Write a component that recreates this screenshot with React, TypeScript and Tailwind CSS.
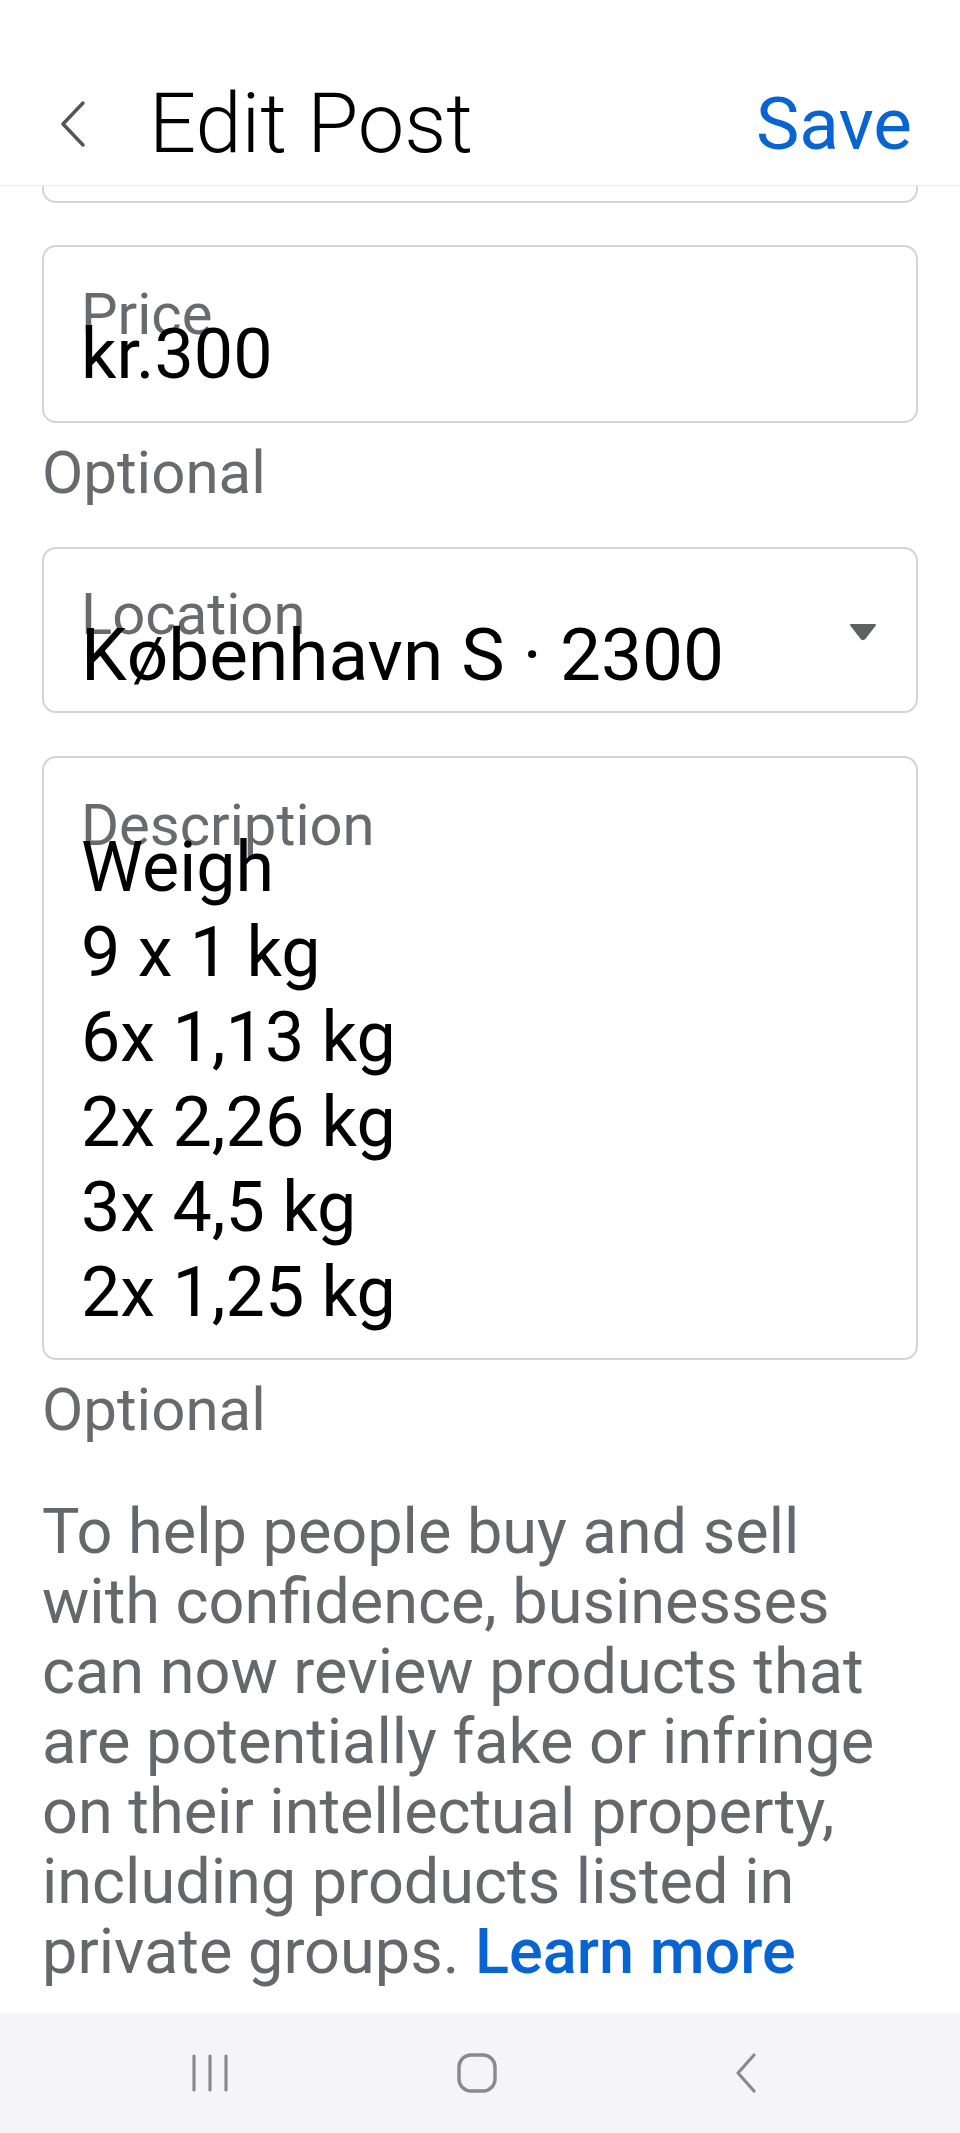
import React from "react";

const font = { fontFamily: "Roboto, 'Noto Sans', Arial, sans-serif" };

const Field = ({
  label,
  children,
  className,
}: {
  label: string;
  children: React.ReactNode;
  className?: string;
}) => (
  <div
    className={`mx-[42px] rounded-[14px] border-2 border-[#d2d4d8] pl-[37px] pt-[37px] ${className ?? ""}`}
  >
    <div className="text-[58px] leading-[60px] text-[#686a6f]">{label}</div>
    {children}
  </div>
);

export default function App() {
  const lines = ["Weigh", "9 x 1 kg", "6x 1,13 kg", "2x 2,26 kg", "3x 4,5 kg", "2x 1,25 kg"];
  return (
    <div className="flex h-[2133px] flex-col bg-white text-black" style={font}>
      {/* header */}
      <div className="flex h-[186px] items-center border-b border-[#ececec] pt-[62px] pl-[56px] pr-[48px]">
        <svg width="34" height="48" viewBox="0 0 34 48" className="shrink-0">
          <path
            d="M27 3 L7 24 L27 45"
            fill="none"
            stroke="#555658"
            strokeWidth="3.5"
            strokeLinecap="round"
            strokeLinejoin="round"
          />
        </svg>
        <h1 className="ml-[59px] text-[83px] leading-[82px] font-light">Edit Post</h1>
        <button className="ml-auto text-[73px] leading-[70px] text-[#0864d2]">Save</button>
      </div>

      {/* field scrolled under header */}
      <div className="mx-[42px] h-[17px] rounded-b-[14px] border-x-2 border-b-2 border-[#d2d4d8]" />

      <Field label="Price" className="mt-[42px] h-[178px]">
        <div className="-mt-[25px] text-[70px] leading-[70px]">kr.300</div>
      </Field>
      <div className="mx-[42px] mt-[20px] text-[60px] leading-[60px] text-[#686a6f]">Optional</div>

      <div className="mx-[42px] mt-[44px] flex h-[166px] items-start rounded-[14px] border-2 border-[#d2d4d8] pl-[37px] pr-[39px] pt-[35px]">
        <div className="flex-1">
          <div className="text-[58px] leading-[60px] text-[#686a6f]">Location</div>
          <div className="-mt-[25px] text-[73px] leading-[72px]">København S · 2300</div>
        </div>
        <svg width="28" height="18" viewBox="0 0 28 18" className="mt-[39px] shrink-0">
          <path d="M2 2 H26 L16 15 Q14 17.5 12 15 Z" fill="#5f6165" stroke="#5f6165" strokeWidth="2" strokeLinejoin="round" />
        </svg>
      </div>

      <Field label="Description" className="mt-[43px] h-[604px]">
        <div className="-mt-[30px]">
          {lines.map((l) => (
            <div key={l} className="text-[70px] leading-[85px]">
              {l}
            </div>
          ))}
        </div>
      </Field>
      <div className="mx-[42px] mt-[20px] text-[60px] leading-[60px] text-[#686a6f]">Optional</div>

      <p className="mx-[42px] mt-[57px] text-[63px] leading-[70px] text-[#65676b]">
        To help people buy and sell
        <br />
        with confidence, businesses
        <br />
        can now review products that
        <br />
        are potentially fake or infringe
        <br />
        on their intellectual property,
        <br />
        including products listed in
        <br />
        private groups. <span className="font-medium text-[#0864d2]">Learn more</span>
      </p>

      {/* android nav bar */}
      <div className="mt-auto flex h-[120px] items-center bg-[#f5f5f7] pl-[190px]">
        <svg width="40" height="40" viewBox="0 0 40 40" className="shrink-0">
          <g stroke="#8a8a8c" strokeWidth="3.2" strokeLinecap="round">
            <line x1="4" y1="3" x2="4" y2="37" />
            <line x1="20" y1="3" x2="20" y2="37" />
            <line x1="36" y1="3" x2="36" y2="37" />
          </g>
        </svg>
        <svg width="42" height="42" viewBox="0 0 42 42" className="ml-[226px] shrink-0">
          <rect x="3" y="3" width="36" height="36" rx="12" fill="none" stroke="#8a8a8c" strokeWidth="3.4" />
        </svg>
        <svg width="26" height="42" viewBox="0 0 26 42" className="ml-[235px] shrink-0">
          <path d="M21 3 L5 21 L21 39" fill="none" stroke="#8a8a8c" strokeWidth="3.2" strokeLinecap="round" strokeLinejoin="round" />
        </svg>
      </div>
    </div>
  );
}
